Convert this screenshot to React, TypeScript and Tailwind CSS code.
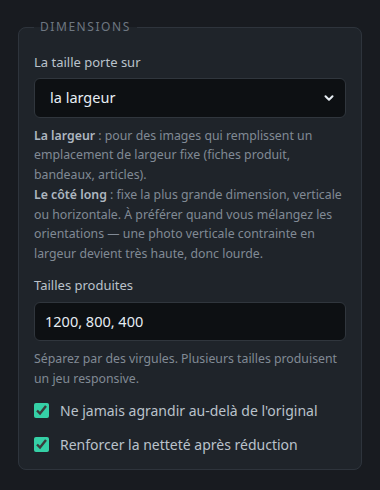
import { ChevronDown } from 'lucide-react';

export default function App() {
  return (
    <div className="min-h-[490px] w-[380px] bg-[#181b20] px-[18px] pt-[18px] pb-5 font-['Noto_Sans',sans-serif]">
      <fieldset className="rounded-lg border border-[#2e343c] bg-[#1f242a] px-[15px] pt-[17px] pb-[14px]">
        <legend className="px-1.5 text-[12px] tracking-[0.13em] text-[#6e7781] uppercase">
          Dimensions
        </legend>

        {/* Cible du redimensionnement */}
        <label className="block text-[13px] text-[#bac2cb] mb-[5px]">La taille porte sur</label>
        <div className="relative">
          <select
            defaultValue="width"
            className="w-full h-[40px] appearance-none rounded-md border border-[#30363d] bg-[#0d1013] pl-[15px] text-[14.5px] text-[#e6edf3] outline-none"
          >
            <option value="width">la largeur</option>
            <option value="long">le côté long</option>
          </select>
          <ChevronDown
            size={14}
            strokeWidth={3.5}
            className="pointer-events-none absolute right-[10px] top-[13px] text-[#e6edf3]"
          />
        </div>

        <p className="mt-[8px] text-[12.3px] leading-[19.8px] text-[#818a95]">
          <strong className="font-semibold text-[#aeb7c0]">La largeur</strong> : pour des images qui remplissent un
          emplacement de largeur fixe (fiches produit, bandeaux, articles).
          <br />
          <strong className="font-semibold text-[#aeb7c0]">Le côté long</strong> : fixe la plus grande dimension,
          verticale ou horizontale. À préférer quand vous mélangez les orientations — une photo verticale contrainte en
          largeur devient très haute, donc lourde.
        </p>

        {/* Tailles */}
        <label className="mt-[12px] block text-[13px] text-[#bac2cb] mb-[6px]">Tailles produites</label>
        <input
          type="text"
          defaultValue="1200, 800, 400"
          className="w-full h-[39px] rounded-md border border-[#30363d] bg-[#0d1013] px-[10px] text-[14.5px] text-[#e6edf3] outline-none"
        />
        <p className="mt-[8px] text-[12.3px] leading-[20px] text-[#818a95]">
          Séparez par des virgules. Plusieurs tailles produisent un jeu responsive.
        </p>

        <div className="mt-[11px] flex flex-col gap-[13px]">
          <label className="flex items-center gap-[11px] text-[14px] text-[#bac2cb]">
            <input type="checkbox" defaultChecked className="size-[15px] accent-[#35d0a6]" />
            Ne jamais agrandir au-delà de l'original
          </label>
          <label className="flex items-center gap-[11px] text-[14px] text-[#bac2cb]">
            <input type="checkbox" defaultChecked className="size-[15px] accent-[#35d0a6]" />
            Renforcer la netteté après réduction
          </label>
        </div>
      </fieldset>
    </div>
  );
}
